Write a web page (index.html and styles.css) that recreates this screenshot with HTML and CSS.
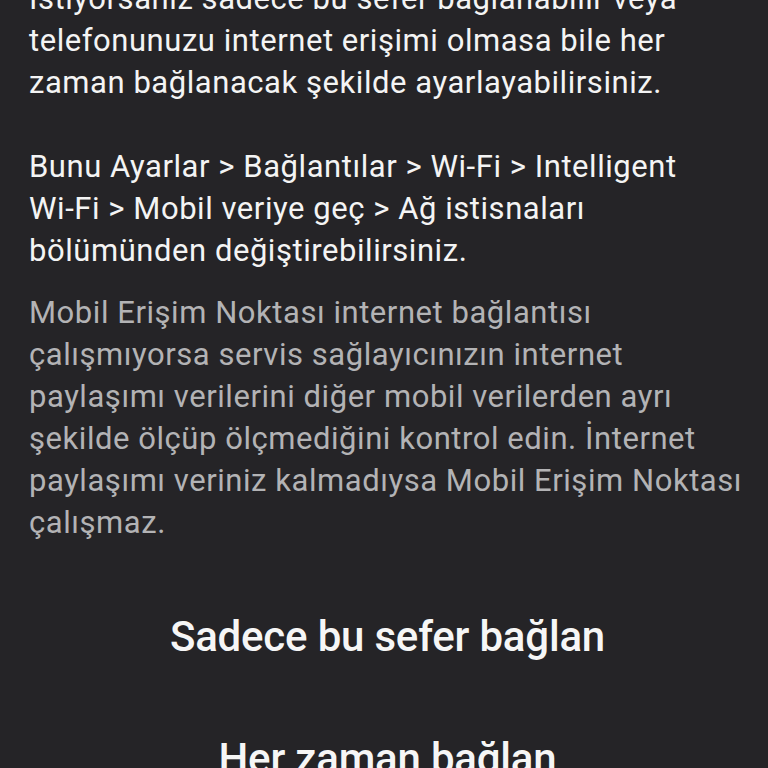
FILE: index.html
```html
<!DOCTYPE html>
<html lang="tr">
<head>
<meta charset="utf-8">
<title>Mobil Erişim Noktası</title>
<link rel="stylesheet" href="styles.css">
</head>
<body>
<main class="dialog">
  <div class="content">
    <p class="text">İstiyorsanız sadece bu sefer bağlanabilir veya telefonunuzu internet erişimi olmasa bile her zaman bağlanacak şekilde ayarlayabilirsiniz.</p>
    <p class="text gap">Bunu Ayarlar &gt; Bağlantılar &gt; <span class="nw">Wi-Fi</span> &gt; Intelligent <span class="nw">Wi-Fi</span> &gt; Mobil veriye geç &gt; Ağ istisnaları bölümünden değiştirebilirsiniz.</p>
    <p class="text note">Mobil Erişim Noktası internet bağlantısı çalışmıyorsa servis sağlayıcınızın internet paylaşımı verilerini diğer mobil verilerden ayrı şekilde ölçüp ölçmediğini kontrol edin. İnternet paylaşımı veriniz kalmadıysa Mobil Erişim Noktası çalışmaz.</p>
  </div>
  <div class="actions">
    <button class="action">Sadece bu sefer bağlan</button>
    <button class="action">Her zaman bağlan</button>
  </div>
</main>
</body>
</html>
```
FILE: styles.css
```css
html, body {
  margin: 0;
  padding: 0;
  background: #252427;
  height: 100%;
  overflow: hidden;
}
body {
  font-family: Roboto, "Noto Sans", sans-serif;
  color: #f4f4f4;
}
.dialog {
  padding: 0 22px 0 29px;
  margin-top: -22px;
}
.text {
  margin: 0;
  font-size: 31px;
  line-height: 42px;
  letter-spacing: 0.55px;
}
.nw {
  white-space: nowrap;
}
.gap {
  margin-top: 42px;
}
.note {
  margin-top: 20px;
  color: #b3b3b5;
}
.actions {
  display: flex;
  flex-direction: column;
  align-items: center;
  margin-top: 68px;
  gap: 72px;
}
.action {
  background: none;
  border: 0;
  padding: 0;
  font-family: Roboto, "Noto Sans", sans-serif;
  font-weight: 500;
  font-size: 42px;
  line-height: 50px;
  color: #f6f6f6;
  letter-spacing: -0.2px;
}
```
